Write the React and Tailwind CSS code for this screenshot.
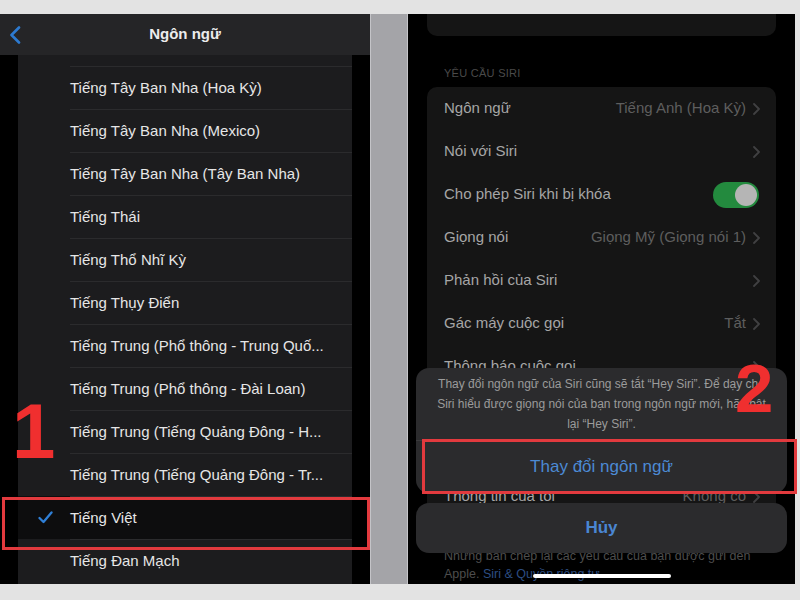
import React from 'react';

const languages = [
  'Tiếng Tây Ban Nha (Hoa Kỳ)',
  'Tiếng Tây Ban Nha (Mexico)',
  'Tiếng Tây Ban Nha (Tây Ban Nha)',
  'Tiếng Thái',
  'Tiếng Thổ Nhĩ Kỳ',
  'Tiếng Thụy Điển',
  'Tiếng Trung (Phổ thông - Trung Quố...',
  'Tiếng Trung (Phổ thông - Đài Loan)',
  'Tiếng Trung (Tiếng Quảng Đông - H...',
  'Tiếng Trung (Tiếng Quảng Đông - Tr...',
  'Tiếng Việt',
  'Tiếng Đan Mạch',
];

const siriRows = [
  { label: 'Ngôn ngữ', value: 'Tiếng Anh (Hoa Kỳ)', chevron: true },
  { label: 'Nói với Siri', chevron: true },
  { label: 'Cho phép Siri khi bị khóa', toggle: true },
  { label: 'Giọng nói', value: 'Giọng Mỹ (Giọng nói 1)', chevron: true },
  { label: 'Phản hồi của Siri', chevron: true },
  { label: 'Gác máy cuộc gọi', value: 'Tắt', chevron: true },
  { label: 'Thông báo cuộc gọi', chevron: true },
];

function Chevron() {
  return (
    <svg width="7" height="12" viewBox="0 0 7 12" className="ml-[7px] mr-[2px] shrink-0">
      <polyline points="1,1 6,6 1,11" fill="none" stroke="#404042" strokeWidth="1.8" strokeLinecap="round" strokeLinejoin="round" />
    </svg>
  );
}

function LeftScreen() {
  return (
    <div className="w-[370px] h-full bg-black flex flex-col">
      {/* Nav bar */}
      <div className="relative h-[41px] bg-[#252527] flex items-center justify-center shrink-0">
        <svg width="12" height="18" viewBox="0 0 12 18" className="absolute left-[9px] top-[12px]">
          <polyline points="10,1.5 2.5,9 10,16.5" fill="none" stroke="#2d7ad0" strokeWidth="2.6" strokeLinecap="round" strokeLinejoin="round" />
        </svg>
        <span className="text-[15px] font-semibold text-[#ececec]">Ngôn ngữ</span>
      </div>

      {/* List */}
      <div className="flex-1 flex min-h-0">
        <div className="w-[18px] shrink-0" />
        <div className="w-[334px] bg-[#1c1c1e] pt-[11px] overflow-hidden">
          {languages.map(lang => {
            const selected = lang === 'Tiếng Việt';
            return (
              <div key={lang} className={`h-[43px] flex ${selected ? 'bg-[#0d0d0e]' : ''}`}>
                <div className="w-[52px] shrink-0 flex items-center justify-start pl-[20px]">
                  {selected && (
                    <svg width="15" height="13" viewBox="0 0 15 13">
                      <polyline points="1.5,7 5.5,11 13.5,1.5" fill="none" stroke="#2f7fd6" strokeWidth="2.3" strokeLinecap="round" strokeLinejoin="round" />
                    </svg>
                  )}
                </div>
                <div className="flex-1 border-t border-[#2b2b2d] flex items-center">
                  <span className="text-[15px] text-[#e6e6e6] whitespace-nowrap">{lang}</span>
                </div>
              </div>
            );
          })}
        </div>
        <div className="flex-1" />
      </div>
    </div>
  );
}

function RightScreen() {
  return (
    <div className="w-[387px] h-full bg-black px-[19px] flex flex-col overflow-hidden">
      <div className="h-[22px] bg-[#151515] rounded-b-[10px] shrink-0" />

      <div className="mt-[31px] pl-[17px] text-[11px] leading-[13px] text-[#4a4a4a] tracking-wide">YÊU CẦU SIRI</div>

      <div className="mt-[7px] bg-[#151515] rounded-[10px] shrink-0">
        {siriRows.map(row => (
          <div key={row.label} className="h-[43px] flex items-center pl-[17px] pr-[14px]">
            <span className="text-[15px] text-[#a6a6a6] whitespace-nowrap flex-1">{row.label}</span>
            {row.value && <span className="text-[15px] text-[#5e5e5e] whitespace-nowrap">{row.value}</span>}
            {row.chevron && <Chevron />}
            {row.toggle && (
              <div className="w-[46px] h-[26px] rounded-full bg-[#238a3e] p-[2px] flex justify-end mr-[3px]">
                <div className="w-[22px] h-[22px] rounded-full bg-[#b5b5b5]" />
              </div>
            )}
          </div>
        ))}
      </div>

      <div className="mt-[87px] bg-[#151515] rounded-[10px] shrink-0">
        <div className="h-[43px] flex items-center pl-[17px] pr-[14px]">
          <span className="text-[15px] text-[#a6a6a6] flex-1">Thông tin của tôi</span>
          <span className="text-[15px] text-[#5e5e5e]">Không có</span>
          <Chevron />
        </div>
      </div>

      <div className="mt-[29px] pl-[17px] text-[12.5px] leading-[18px] text-[#4d4d4d] whitespace-nowrap">
        <div>Những bản chép lại các yêu cầu của bạn được gửi đến</div>
        <div>
          Apple. <span className="text-[#2c4d82]">Siri &amp; Quyền riêng tư</span>
        </div>
      </div>
    </div>
  );
}

export default function App() {
  return (
    <div className="relative w-[800px] h-[600px] overflow-hidden bg-[#e3e3e3] pt-[14px] font-['Liberation_Sans',Arial,sans-serif]">
      <div className="flex h-[570px]">
        <LeftScreen />
        <div className="w-[38px] bg-[#a4a4a8] border-x border-[#c4c4c8]" />
        <RightScreen />
      </div>

      {/* Action sheet */}
      <div className="absolute left-[416px] top-[368px] w-[371px] rounded-[13px] bg-[#2b2b2d] overflow-hidden">
        <div className="h-[72px] flex flex-col justify-center items-center text-[12px] leading-[20px] text-[#9b9b9b] whitespace-nowrap">
          <div>Thay đổi ngôn ngữ của Siri cũng sẽ tắt “Hey Siri”. Để dạy cho</div>
          <div>Siri hiểu được giọng nói của bạn trong ngôn ngữ mới, hãy bật</div>
          <div>lại “Hey Siri”.</div>
        </div>
        <div className="h-[53px] border-t border-[#3a3a3c] flex items-center justify-center">
          <span className="text-[17px] text-[#4c8ad4]">Thay đổi ngôn ngữ</span>
        </div>
      </div>
      <div className="absolute left-[416px] top-[503px] w-[371px] h-[50px] rounded-[13px] bg-[#2b2b2d] flex items-center justify-center">
        <span className="text-[17px] font-semibold text-[#4a86d2]">Hủy</span>
      </div>

      {/* Home indicator */}
      <div className="absolute left-[533px] top-[574px] w-[138px] h-[4px] rounded-full bg-white" />

      {/* Annotations */}
      <div className="absolute left-[2px] top-[497px] w-[368px] h-[53px] border-[3px] border-[#e23a3e]" />
      <div className="absolute left-[422px] top-[439px] w-[375px] h-[55px] border-[3px] border-[#e23a3e]" />
      <div className="absolute left-[12px] top-[392px] text-[78px] leading-none font-bold text-[#f02f2f]">1</div>
      <div className="absolute left-[735px] top-[354px] text-[69px] leading-none font-bold text-[#f02f2f]">2</div>
    </div>
  );
}
